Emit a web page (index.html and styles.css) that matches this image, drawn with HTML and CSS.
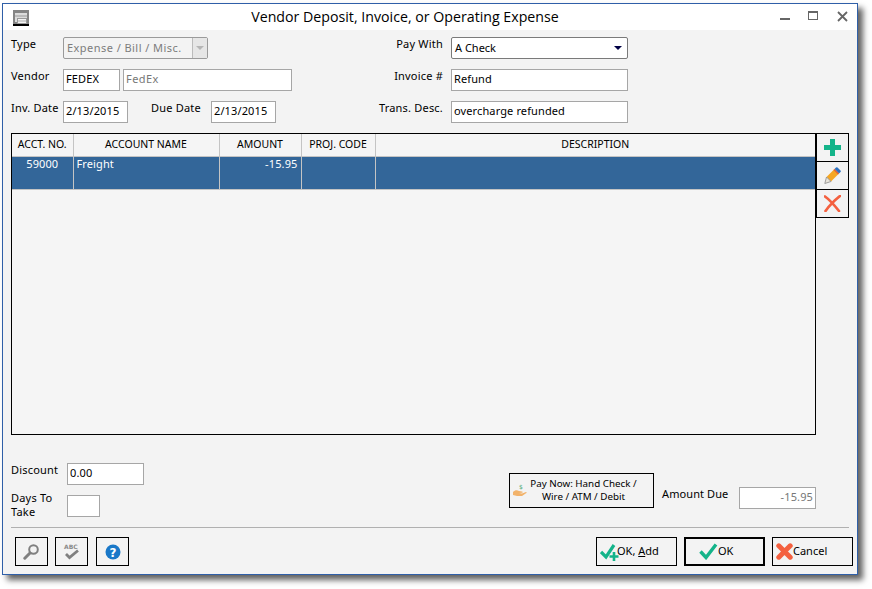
FILE: index.html
```html
<!DOCTYPE html>
<html lang="en">
<head>
<meta charset="utf-8">
<title>Vendor Deposit, Invoice, or Operating Expense</title>
<link rel="stylesheet" href="styles.css">
</head>
<body>
<div class="window">
  <header class="titlebar">
    <svg class="app-icon" width="17" height="16" viewBox="0 0 17 16">
      <rect x="0" y="0" width="16" height="14" fill="#858585"/>
      <rect x="0" y="14" width="16" height="2" fill="#000"/>
      <rect x="2" y="3" width="12" height="9" fill="#dcdcdc"/>
      <path d="M2 6h12" stroke="#9a9a9a" fill="none"/>
      <rect x="4.500" y="8.500" width="9" height="5" fill="#f4f4f4" stroke="#999"/>
      <path d="M5 11h8" stroke="#aaa" fill="none"/>
    </svg>
    <h1 class="title">Vendor Deposit, Invoice, or Operating Expense</h1>
    <div class="controls">
      <span class="ctl-min"></span>
      <span class="ctl-max"></span>
      <svg class="ctl-close" width="11" height="11" viewBox="0 0 11 11"><path d="M1 1l9 9M10 1l-9 9" stroke="#666" stroke-width="1.800" fill="none"/></svg>
    </div>
  </header>

  <main class="content">
    <section class="form">
      <label class="lbl">Type</label>
      <div class="left-cell">
        <div class="select select-disabled">
          <span>Expense / Bill / Misc.</span>
          <span class="drop-btn"><i class="arrow arrow-gray"></i></span>
        </div>
      </div>
      <label class="lbl lbl-right">Pay With</label>
      <div class="select select-pay">
        <span>A Check</span>
        <i class="arrow"></i>
      </div>

      <label class="lbl">Vendor</label>
      <div class="left-cell">
        <input class="field f-code" value="FEDEX" readonly>
        <input class="field f-name muted" value="FedEx" readonly>
      </div>
      <label class="lbl lbl-right">Invoice #</label>
      <input class="field f-wide" value="Refund" readonly>

      <label class="lbl">Inv. Date</label>
      <div class="left-cell">
        <input class="field f-date" value="2/13/2015" readonly>
        <label class="lbl lbl-due">Due Date</label>
        <input class="field f-date" value="2/13/2015" readonly>
      </div>
      <label class="lbl lbl-right">Trans. Desc.</label>
      <input class="field f-wide" value="overcharge refunded" readonly>
    </section>

    <section class="grid-area">
      <div class="table-box">
        <table class="lines">
          <colgroup><col class="c1"><col class="c2"><col class="c3"><col class="c4"><col></colgroup>
          <thead>
            <tr><th>ACCT. NO.</th><th>ACCOUNT NAME</th><th>AMOUNT</th><th>PROJ. CODE</th><th>DESCRIPTION</th></tr>
          </thead>
          <tbody>
            <tr><td class="center">59000</td><td>Freight</td><td class="right">-15.95</td><td></td><td></td></tr>
          </tbody>
        </table>
      </div>
      <div class="side">
        <button class="side-btn" type="button">
          <svg width="17" height="17" viewBox="0 0 17 17"><path d="M8.500 0v17M0 8.500h17" stroke="#14b48a" stroke-width="5" fill="none"/></svg>
        </button>
        <button class="side-btn" type="button">
          <svg width="17" height="17" viewBox="0 0 17 17">
            <path d="M2.500 10L10.500 2l4.500 4.500-8 8z" fill="#f5a623"/>
            <path d="M10.500 2l1.500-1.500a1.200 1.200 0 0 1 1.500 0l3 3a1.200 1.200 0 0 1 0 1.500L15 6.500z" fill="#2b72c2"/>
            <path d="M10.500 2l4.500 4.500-1 1L9.500 3z" fill="#e0603a"/>
            <path d="M2.500 10l4.500 4.500L.8 16.500z" fill="#e9e4da" stroke="#8a8a8a" stroke-width=".8"/>
          </svg>
        </button>
        <button class="side-btn" type="button">
          <svg width="17" height="17" viewBox="0 0 17 17"><path d="M1 1.500C6 5 11 11 15 16M16 1C11 5 5 11 1.500 16" stroke="#f4603f" stroke-width="2.700" fill="none" stroke-linecap="round"/></svg>
        </button>
      </div>
    </section>

    <section class="lower">
      <div class="terms">
        <label class="lbl">Discount</label>
        <input class="field f-discount" value="0.00" readonly>
        <label class="lbl lbl-days">Days To Take</label>
        <input class="field f-days" readonly>
      </div>
      <div class="due">
        <button class="pay-btn" type="button">
          <svg class="pay-icon" width="14" height="15" viewBox="0 0 14 15">
            <text x="6" y="6" class="dollar">$</text>
            <path d="M0 9c2-2 4-2 6-1l3 .5c1 .3 1 1.200 0 1.300L6 10l3 .5 4-1.500c.8 0 1 .8 0 1.300L9 13H4l-4-1z" fill="#f2b36b"/>
          </svg>
          <span>Pay Now: Hand Check /<br>Wire / ATM / Debit</span>
        </button>
        <label class="lbl lbl-amount">Amount Due</label>
        <input class="field f-amount muted" value="-15.95" readonly>
      </div>
    </section>

    <hr class="rule">

    <footer class="footer">
      <div class="tools">
        <button class="tool" type="button">
          <svg width="17" height="16" viewBox="0 0 17 16"><circle cx="10.500" cy="5.500" r="4.300" fill="none" stroke="#808080" stroke-width="2"/><path d="M7 9L1.800 14.200" stroke="#808080" stroke-width="3" stroke-linecap="round"/></svg>
        </button>
        <button class="tool" type="button">
          <svg width="17" height="17" viewBox="0 0 17 17"><text x="1" y="6" class="abc">ABC</text><path d="M3 11l3.500 3.500L15 7.500" stroke="#808080" stroke-width="2.800" fill="none"/></svg>
        </button>
        <button class="tool" type="button">
          <svg width="16" height="16" viewBox="0 0 16 16"><circle cx="8" cy="8" r="7.500" fill="#1a78c8"/><text x="8" y="12.500" class="help">?</text></svg>
        </button>
      </div>
      <div class="actions">
        <button class="action action-add" type="button">
          <svg width="20" height="20" viewBox="0 0 20 20"><path d="M1 10l5 5L14 3" stroke="#14b48a" stroke-width="3.200" fill="none"/><path d="M14 10v9M9.500 14.500h9" stroke="#14b48a" stroke-width="2.600" fill="none"/></svg>
          <span>OK, <u>A</u>dd</span>
        </button>
        <button class="action action-default" type="button">
          <svg width="19" height="17" viewBox="0 0 19 17"><path d="M1.500 8.500L7 14.500 17 1.500" stroke="#14b48a" stroke-width="3.400" fill="none"/></svg>
          <span>OK</span>
        </button>
        <button class="action action-cancel" type="button">
          <svg width="17" height="17" viewBox="0 0 17 17"><path d="M2.800 2.800l11.400 11.400M14.200 2.800L2.800 14.200" stroke="#f4603f" stroke-width="5" stroke-linecap="round" fill="none"/></svg>
          <span>Cancel</span>
        </button>
      </div>
    </footer>
  </main>
</div>
</body>
</html>
```
FILE: styles.css
```css
* { box-sizing: border-box; }
html, body { margin: 0; padding: 0; background: #fff; }
body {
  width: 872px;
  height: 589px;
  overflow: hidden;
  padding: 3px 0 0 2px;
  font-family: "Noto Sans", "DejaVu Sans", sans-serif;
  font-size: 11px;
  color: #000;
}
.window {
  width: 856px;
  height: 572px;
  border: 1px solid #2f5fa8;
  background: #f3f3f3;
  box-shadow: 5px 5px 6px rgba(0, 0, 0, .62);
  display: flex;
  flex-direction: column;
}
.titlebar {
  height: 26px;
  background: #fff;
  display: flex;
  align-items: center;
  padding-left: 10px;
  flex: none;
}
.app-icon { flex: none; margin-top: 1px; }
.title {
  flex: 1;
  margin: 0;
  text-align: center;
  font-family: "Open Sans", "Noto Sans", sans-serif;
  font-size: 14.200px;
  font-weight: 400;
  line-height: 26px;
}
.controls {
  width: 77px;
  flex: none;
  height: 26px;
  display: flex;
  align-items: flex-start;
}
.ctl-min { width: 10px; height: 2px; background: #666; margin-top: 14px; }
.ctl-max { width: 10px; height: 9px; border: 1px solid #666; border-top-width: 2px; margin: 7px 0 0 18px; }
.ctl-close { margin: 7px 0 0 19px; }

.content {
  flex: 1;
  padding: 7px 8px 8px;
  display: flex;
  flex-direction: column;
}

.form {
  display: grid;
  grid-template-columns: 52px 229px 159px 177px;
  grid-auto-rows: 22px;
  row-gap: 10px;
  column-gap: 0;
}
.lbl { line-height: 14px; white-space: nowrap; letter-spacing: .2px; }
.lbl-right { text-align: right; padding-right: 8px; }
.left-cell { display: flex; gap: 3px; }
.lbl-due { width: 57px; margin-left: 20px; flex: none; }
.field {
  height: 22px;
  border: 1px solid #a6a6a6;
  background: #fff;
  padding: 0 2px 3px;
  margin: 0;
  font: inherit;
  letter-spacing: .12px;
  color: #000;
  border-radius: 0;
  outline: none;
}
.muted { color: #777; letter-spacing: .45px; }
.f-code { width: 57px; }
.f-name { width: 169px; }
.f-date { width: 65px; }
.f-wide { width: 177px; }

.select {
  height: 22px;
  border: 1px solid #9a9a9a;
  border-radius: 2px;
  background: #fff;
  display: flex;
  align-items: center;
  justify-content: space-between;
  padding: 0 0 1px 3px;
}
.select-disabled { width: 145px; color: #7c7c7c; background: #f3f3f3; letter-spacing: .45px; }
.select-pay { width: 177px; padding-right: 5px; border-color: #7a7a7a; }
.drop-btn {
  width: 15px;
  height: 20px;
  margin-bottom: -1px;
  background: #e6e6e6;
  border-left: 1px solid #bbb;
  display: flex;
  align-items: center;
  justify-content: center;
}
.arrow {
  width: 0;
  height: 0;
  border-left: 4px solid transparent;
  border-right: 4px solid transparent;
  border-top: 4px solid #000044;
}
.arrow-gray { border-top-color: #b5b5b5; }

.grid-area { display: flex; margin-top: 10px; }
.table-box {
  width: 805px;
  height: 302px;
  border: 1px solid #000;
  background: #f5f5f5;
  flex: none;
}
.lines {
  width: 100%;
  table-layout: fixed;
  border-collapse: collapse;
}
.c1 { width: 61px; }
.c2 { width: 146px; }
.c3 { width: 82px; }
.c4 { width: 74px; }
.lines th {
  height: 22px;
  padding: 0 0 2px;
  font-size: 10.500px;
  font-weight: 400;
  text-align: center;
  border-right: 1px solid #c4c4c4;
  border-bottom: 1px solid #c4c4c4;
  white-space: nowrap;
}
.lines th:last-child, .lines td:last-child { border-right: 0; }
.lines td {
  height: 33px;
  padding: 0 3px;
  vertical-align: top;
  line-height: 14px;
  letter-spacing: .12px;
  color: #fff;
  background: #336699;
  border-right: 1px solid #c4c4c4;
  border-bottom: 1px solid #c4c4c4;
}
.lines .center { text-align: center; }
.lines .right { text-align: right; }

.side { width: 33px; flex: none; display: flex; flex-direction: column; }
.side-btn {
  width: 33px;
  height: 29px;
  margin: 0 0 -1px;
  padding: 0;
  border: 1px solid #000;
  background: #f3f3f3;
  display: flex;
  align-items: center;
  justify-content: center;
}

.lower {
  height: 92px;
  padding: 28px 33px 0 0;
  display: flex;
  justify-content: space-between;
  flex: none;
}
.terms {
  display: grid;
  grid-template-columns: 56px auto;
  grid-auto-rows: 22px;
  row-gap: 10px;
  align-content: start;
  justify-content: start;
}
.f-discount { width: 77px; }
.f-days { width: 33px; }
.lbl-days { white-space: normal; width: 50px; margin-top: -4px; height: 28px; }
.due { display: flex; align-items: flex-start; padding-top: 10px; }
.pay-btn {
  width: 145px;
  height: 35px;
  border: 1px solid #000;
  background: #f3f3f3;
  padding: 0 0 1px 3px;
  font: inherit;
  font-size: 9.800px;
  line-height: 13px;
  display: flex;
  align-items: center;
}
.pay-btn span { flex: 1; text-align: center; margin-right: 13px; }
.pay-icon { flex: none; }
.dollar { font-size: 6px; fill: #4aa878; font-family: "DejaVu Sans", sans-serif; }
.lbl-amount { margin: 14px 0 0 8px; width: 77px; letter-spacing: .1px; }
.f-amount { width: 77px; margin-top: 14px; text-align: right; letter-spacing: .12px; }

.rule {
  height: 1px;
  margin: 0;
  border: 0;
  background: #b0b0b0;
  flex: none;
}
.footer {
  margin: 9px -4px 0 4px;
  display: flex;
  justify-content: space-between;
}
.tools { display: flex; gap: 7px; }
.tool {
  width: 33px;
  height: 29px;
  padding: 0;
  border: 1px solid #000;
  background: #f3f3f3;
  display: flex;
  align-items: center;
  justify-content: center;
}
.tool + .tool + .tool { margin-left: 1px; }
.abc { font-size: 6px; font-weight: 700; fill: #8a8a8a; font-family: "DejaVu Sans", sans-serif; }
.help { font-size: 12px; font-weight: 700; fill: #fff; text-anchor: middle; font-family: "DejaVu Sans", sans-serif; }
.actions { display: flex; gap: 7px; }
.action {
  width: 81px;
  height: 29px;
  padding: 0 0 2px 3px;
  border: 1px solid #000;
  background: #f3f3f3;
  font: inherit;
  display: flex;
  align-items: center;
  gap: 1px;
}
.action svg { margin-bottom: -2px; }
.action-add { gap: 0; }
.action-add span { margin-left: -3px; }
.action-cancel { gap: 0; }
.action-default { border-width: 2px; padding-left: 13px; gap: 0; }
```
